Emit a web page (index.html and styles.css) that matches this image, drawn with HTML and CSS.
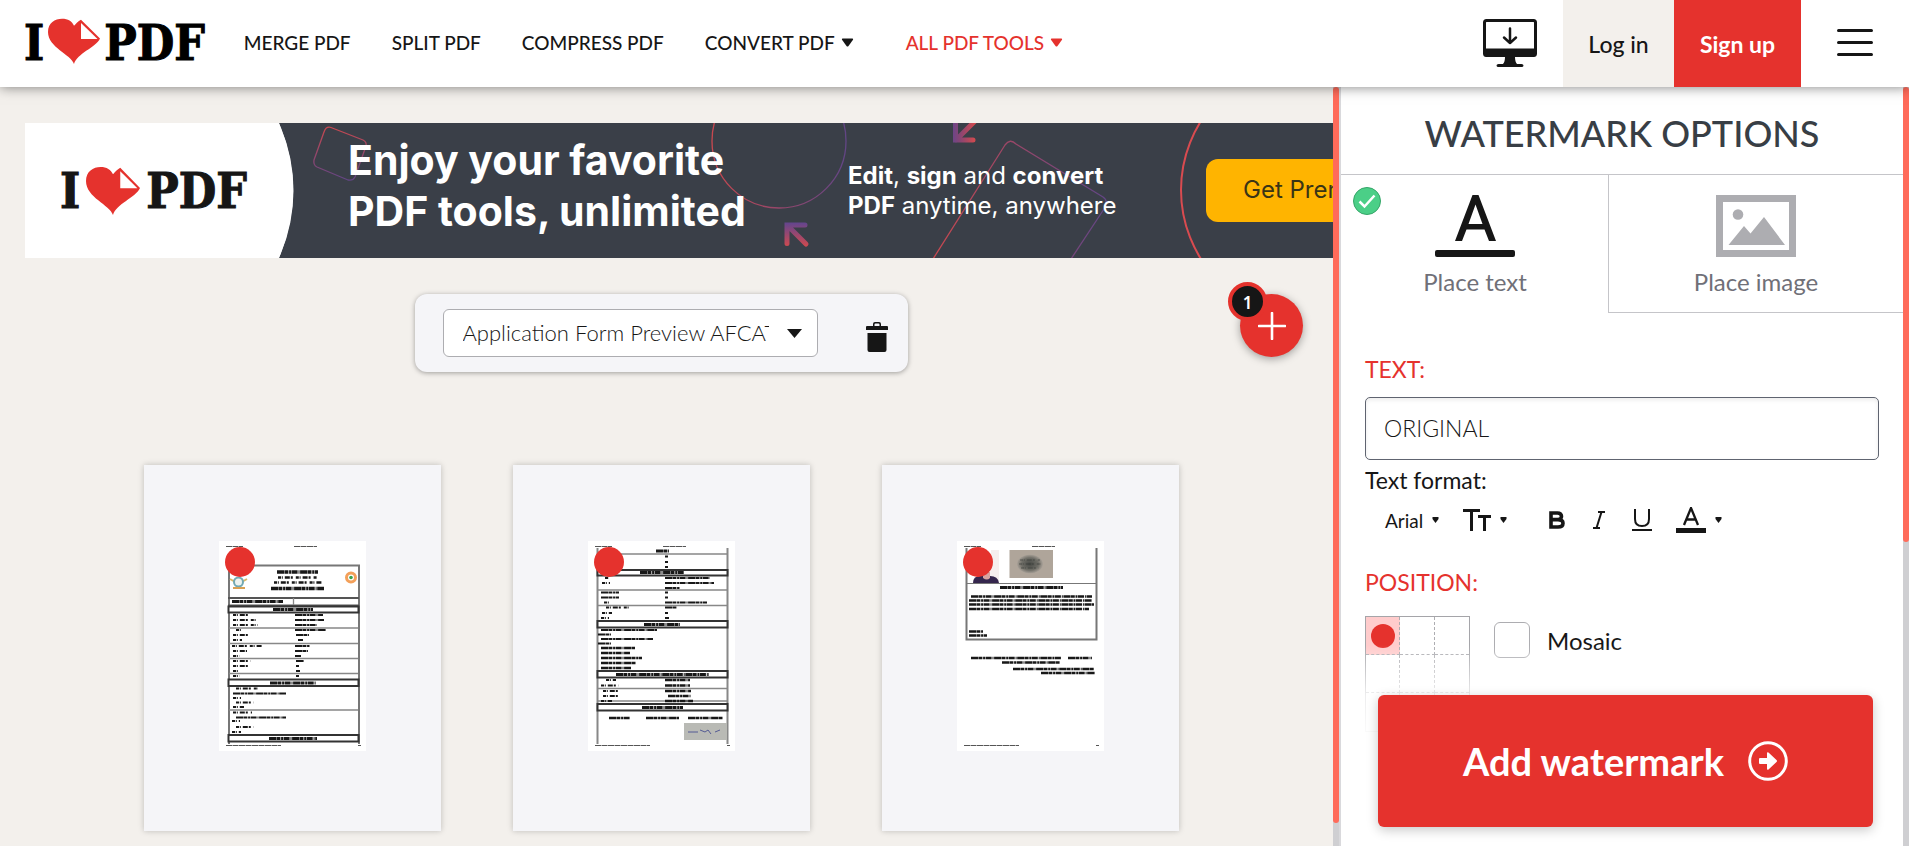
FILE: index.html
```html
<!DOCTYPE html>
<html lang="en">
<head>
<meta charset="utf-8">
<meta name="viewport" content="width=device-width, initial-scale=1">
<title>Watermark PDF</title>
<link rel="stylesheet" href="styles.css">
</head>
<body>
<svg class="defs" width="0" height="0" aria-hidden="true">
  <symbol id="heart" viewBox="0 0 52 56" preserveAspectRatio="none">
    <path fill="#e5322d" d="M26 56C23 44 0 36 0 17C0 6 7 1 14 1C20 1 24 4 26 9.500C28 6.500 30 4 33 2L52 25C48 36 29 43 26 56Z"/>
    <path fill="#fff" d="M33 6V25.500H49.500Z"/>
  </symbol>
</svg>
<header class="topbar">
  <a class="logo" href="#" aria-label="I love PDF"><span>I</span><svg class="logo-heart"><use href="#heart"/></svg><span>PDF</span></a>
  <nav class="nav">
    <a href="#">MERGE PDF</a>
    <a href="#">SPLIT PDF</a>
    <a href="#">COMPRESS PDF</a>
    <a href="#">CONVERT PDF<svg class="caret" viewBox="0 0 12 9"><path d="M1 .5h10q1 .3.500 1.200L7 8q-1 1-2 0L.5 1.700Q0 .8 1 .5z" fill="currentColor"/></svg></a>
    <a class="nav-all" href="#">ALL PDF TOOLS<svg class="caret" viewBox="0 0 12 9"><path d="M1 .5h10q1 .3.500 1.200L7 8q-1 1-2 0L.5 1.700Q0 .8 1 .5z" fill="currentColor"/></svg></a>
  </nav>
  <a class="desktop" href="#" aria-label="Desktop app">
    <svg viewBox="0 0 54 48" width="54" height="48">
      <rect x="1.500" y="1.500" width="51" height="35" rx="2" fill="#fff" stroke="#161616" stroke-width="3"/>
      <path d="M1.500 29.500h51V35q0 3-3 3h-45q-3 0-3-3zM22 38h10q0 5 2 7h4.500q2 0 2 1.500t-2 1.500h-23q-2 0-2-1.500t2-1.500H20q2-2 2-7z" fill="#161616"/>
      <path d="M27 9.500V24M21 18.500l6 5.500 6-5.500" fill="none" stroke="#161616" stroke-width="2.500" stroke-linecap="round" stroke-linejoin="round"/>
    </svg>
  </a>
  <a class="login" href="#">Log in</a>
  <a class="signup" href="#">Sign up</a>
  <button class="menu" type="button" aria-label="Menu"><svg viewBox="0 0 36 28" width="36" height="28"><path d="M1.500 1.500h33M1.500 13.500h33M1.500 25.500h33" stroke="#161616" stroke-width="3" stroke-linecap="round"/></svg></button>
</header>
<div class="workspace">
  <main class="stage">
    <a class="banner" href="#">
      <svg class="banner-art" width="1400" height="135" viewBox="0 0 1400 135" aria-hidden="true">
        <defs>
          <linearGradient id="g1" x1="0" y1="0" x2="0" y2="1"><stop offset="0" stop-color="#c8484f"/><stop offset="1" stop-color="#624585"/></linearGradient>
          <linearGradient id="g2" x1="0" y1="0" x2="1" y2="0"><stop offset="0" stop-color="#c8484f"/><stop offset="1" stop-color="#624585"/></linearGradient>
          <linearGradient id="g3" gradientUnits="userSpaceOnUse" x1="926" y1="0" x2="950" y2="0"><stop offset="0" stop-color="#65458d"/><stop offset=".4" stop-color="#8a4572"/><stop offset="1" stop-color="#d24a4e"/></linearGradient>
          <linearGradient id="g4" gradientUnits="userSpaceOnUse" x1="770" y1="100" x2="770" y2="124"><stop offset="0" stop-color="#65458d"/><stop offset="1" stop-color="#d24a4e"/></linearGradient>
        </defs>
        <path fill="#fff" d="M0 0H254Q282 67 254 135H0z"/>
        <circle cx="106" cy="67.500" r="162.500" fill="#fff"/>
        <path d="M306 4.500L338 17Q342 19 341 23L330 54Q328 58 323 57L292 44Q288 42 289 37L299 9Q301 3 306 4.500Z" fill="none" stroke="url(#g1)" stroke-width="1.300"/>
        <circle cx="754" cy="18" r="67" fill="none" stroke="url(#g2)" stroke-width="1.300"/>
        <path d="M908 136L980 22Q985 15 991 21L1078 74Q1084 78 1079 86L1046 136" fill="none" stroke="url(#g2)" stroke-width="1.300"/>
        <path d="M930.500 -2V17H948M931 17L950 -2" fill="none" stroke="url(#g3)" stroke-width="5" stroke-linecap="round"/>
        <path d="M762 120.500V102H780M763 103L781 121" fill="none" stroke="url(#g4)" stroke-width="5" stroke-linecap="round"/>
        <circle cx="1285" cy="67" r="129" fill="none" stroke="#d94b50" stroke-width="2"/>
      </svg>
      <span class="banner-logo"><span>I</span><svg class="banner-heart"><use href="#heart"/></svg><span>PDF</span></span>
      <span class="banner-title">Enjoy your favorite<br>PDF tools, unlimited</span>
      <span class="banner-copy"><b>Edit</b>, <b>sign</b> and <b>convert</b><br><b>PDF</b> anytime, anywhere</span>
      <span class="banner-cta">Get Premium</span>
    </a>
    <div class="toolrow">
      <div class="filebar">
        <div class="file-pick">
          <select class="file-select" aria-label="File"><option>Application Form Preview AFCAT 2023</option></select>
          <svg class="file-caret" viewBox="0 0 15 9" width="15" height="9"><path d="M0 0h15L7.500 9z" fill="#161616"/></svg>
        </div>
        <button class="trash" type="button" aria-label="Delete file"><svg viewBox="0 0 22 30" width="22" height="30"><path d="M1 4h6V2q0-2 2-2h4q2 0 2 2v2h6q1 0 1 1v3H0V5q0-1 1-1zM8.500 2.500V4h5V2.500q0-1-1-1h-3q-1 0-1 1zM1.500 11h19v17q0 2-2 2h-15q-2 0-2-2z" fill="#161616" fill-rule="evenodd"/></svg></button>
      </div>
      <button class="add" type="button" aria-label="Add more files"><svg viewBox="0 0 28 28" width="28" height="28"><path d="M14 1v26M1 14h26" stroke="#fff" stroke-width="2.600" stroke-linecap="round"/></svg><span class="add-count">1</span></button>
    </div>
    <div class="pages">
      <div class="card"><div class="sheet">
        <svg viewBox="0 0 147 210" width="147" height="210" aria-hidden="true">
          <g fill="none" stroke="#555" stroke-width="1"><path class="d3" d="M7 5.500h17M75 5.500h23M7 204.500h55M139 204.500h3"/></g>
          <path d="M10 24.500H140V203M10 24V203" fill="none" stroke="#777" stroke-width="2"/>
          <path d="M9 57h131M9 64.500h131" stroke="#555" stroke-width="2"/>
          <path d="M74.500 57v7M10 87h129M10 102.500h129M10 117.500h129M10 132.500h129M10 169h129" stroke="#888" stroke-width="1.300"/>
          <g fill="#fff" stroke="#333" stroke-width="2"><path d="M9.500 65.500h130v6h-130zM9.500 138.500h130v6.500h-130zM9.500 194h130v6.500h-130z"/></g>
          <g class="ink"><path class="d1" stroke-width="3.500" d="M58 31h41M52 47.500h53"/><path class="d2" stroke-width="2.500" d="M59 36.500h39M55 41.500h48"/><path class="d1" stroke-width="3" d="M13 60.500h51M54 68.500h40M51 142h46M50 197.500h48"/>
          <path class="d2" stroke-width="2" d="M14 74h17M14 79h23M14 84h25M17 89h5M14 94h15M14 99h9M13 105h30M14 110h14M14 115h7M14 120h18M14 125h17M14 130h5M14 135h7M17 147.500h22M14 157h8M17 161.500h18M14 166h11M14 171.500h19M13 180h8M17 186h18M13 191h9"/>
          <path class="d1" stroke-width="2" d="M76 74h28M76 79h29M76 84h22M76 89h31M77 94h13M79 99h5M76 105h15M76 110h13M76 115h6M77 120h8M77 125h3M77 130h4M77 135h3M14 152.500h53M17 176.500h50"/></g>
          <circle cx="132" cy="36.500" r="4.500" fill="#fff" stroke="#f3a05a" stroke-width="3"/><circle cx="132" cy="36.500" r="1.800" fill="#38a34a"/>
          <path d="M11 38l7 4M28 38l-7 4" stroke="#d9b766" stroke-width="2"/><circle cx="19.500" cy="41" r="4.500" fill="#eef3ef" stroke="#72a9b3" stroke-width="2"/><path d="M14 47h12" stroke="#d9a053" stroke-width="2"/>
        </svg><i class="mark"></i></div></div>
      <div class="card"><div class="sheet">
        <svg viewBox="0 0 147 210" width="147" height="210" aria-hidden="true">
          <g fill="none" stroke="#555" stroke-width="1"><path class="d3" d="M7 5.500h17M75 5.500h23M7 204.500h55M139 204.500h3"/></g>
          <path d="M9.500 7V203M139.500 7V203" stroke="#888" stroke-width="2"/>
          <path d="M10 13h129M10 49h129M10 64.500h129M10 147.500h129M10 160h129" stroke="#888" stroke-width="1.500"/>
          <g fill="#fff" stroke="#333" stroke-width="2"><path d="M9.500 29h130v5.500h-130zM9.500 80h130v6.500h-130zM9.500 130h130v6.500h-130zM9.500 163h130v6.500h-130z"/></g>
          <g class="ink"><path class="d1" stroke-width="3" d="M68 10h13M52 31.500h44M56 83.500h36M28 133.500h93M54 166.500h41"/>
          <path class="d1" stroke-width="2" d="M77 15.500h3M77 21h3M77 26h3M77 37h45M77 42h49M77 47h15M13 51.500h18M77 51.500h3M13 56.500h18M77 56.500h3M77 61.500h42M77 66.500h12M77 72h3M77 77h4M13 89h56M10 93.500h13M13 98h52M10 102.500h13"/>
          <path class="d1" stroke-width="2.600" d="M13 107h34M13 112h29M13 117h41M13 122h35M13 127h30M77 139h25M77 144.500h25M77 150h26M80 155h23M77 160h28M21 177h21M58 177h33M100 177h35"/>
          <path class="d2" stroke-width="2" d="M17 37h4M14 42h8M16 61.500h5M18 66.500h24M14 72h10M13 77h8M18 139h10M13 144.500h18M15 150h15M15 155h15M13 160h11"/></g>
          <rect x="96" y="182" width="43" height="17" fill="#b9bab5"/><path d="M100 191h10M112 189l5 2 3-2 3 4M127 191l5-2" fill="none" stroke="#555b94"/>
        </svg><i class="mark"></i></div></div>
      <div class="card"><div class="sheet">
        <svg viewBox="0 0 147 210" width="147" height="210" aria-hidden="true">
          <defs><radialGradient id="thumb"><stop offset="0" stop-color="#484a46"/><stop offset=".65" stop-color="#6f6e67"/><stop offset="1" stop-color="#a9a198"/></radialGradient></defs>
          <g fill="none" stroke="#555" stroke-width="1"><path class="d3" d="M7 5.500h17M75 5.500h23M7 204.500h55M139 204.500h3"/></g>
          <path d="M9.500 7V98.500H139.500V7" fill="none" stroke="#777" stroke-width="2"/><path d="M10 42.500h129" stroke="#777"/>
          <path d="M34 9h8v33H16q1-6 8-6h9z" fill="#f6eeee"/><path d="M16 42q0-8 9-7h8q8 0 9 7z" fill="#35264d"/><path d="M26 31h7v6q-3 3-7 0z" fill="#d8a3a0"/>
          <rect x="52.500" y="9" width="43.500" height="28" fill="#afa59a"/><ellipse cx="73" cy="23" rx="13" ry="9.500" fill="url(#thumb)"/><path class="d2" d="M63 19h20M62 23h22M64 27h18" stroke="#2f3330" stroke-width="1.500" opacity=".4"/>
          <g class="ink"><path class="d1" stroke-width="3" d="M43 46.500h63"/><path class="d1" stroke-width="2.500" d="M14 55.500h121M12 59.500h123M12 63.500h125M12 68h120M12 90.500h14M12 94.500h18"/><path class="d1" stroke-width="2.500" d="M14 117h90M111 117h24M45 121.500h58M56 128h81M84 132h54"/></g>
        </svg><i class="mark"></i></div></div>
    </div>
  </main>
  <div class="scroll scroll-main"><i></i></div>
  <aside class="panel">
    <h1 class="panel-title">WATERMARK OPTIONS</h1>
    <div class="tabs">
      <button class="tab tab-on" type="button">
        <svg class="tab-check" viewBox="0 0 28 28" width="28" height="28"><circle cx="14" cy="14" r="13.500" fill="#4bcf87" stroke="#35a568"/><path d="M6.500 14.500l5 5 10-11" fill="none" stroke="#fff" stroke-width="2.500"/></svg>
        <svg viewBox="0 0 80 62" width="80" height="62"><path d="M20 46L37.500 0h6L61 46h-7l-4.500-11.500h-18L27 46zM33.500 29h14L40.500 9.500z" fill="#161616"/><rect y="55" width="80" height="7" rx="2" fill="#161616"/></svg>
        <span>Place text</span>
      </button>
      <button class="tab" type="button">
        <svg viewBox="0 0 80 62" width="80" height="62"><path d="M3.500 3.500h73v55h-73z" fill="none" stroke="#adadb1" stroke-width="7"/><circle cx="22" cy="19.500" r="5.300" fill="#adadb1"/><path d="M12.500 50L28 31l6.500 7.500L48 22l21 28z" fill="#adadb1"/></svg>
        <span>Place image</span>
      </button>
    </div>
    <form class="options">
      <label class="heading" for="wm-text">TEXT:</label>
      <input class="wm-input" id="wm-text" type="text" value="ORIGINAL">
      <p class="sub">Text format:</p>
      <div class="format">
        <button class="fmt-font" type="button">Arial<svg class="mini" viewBox="0 0 6 6"><path d="M0 0h6v2L3 6 0 2z" fill="#161616"/></svg></button>
        <button class="fmt-size" type="button" aria-label="Size"><svg viewBox="0 0 28 22" width="28" height="22"><path d="M0 0h17v3h-7v19H7V3H0zM15 6h13v3h-5v13h-3V9h-5z" fill="#161616"/></svg><svg class="mini" viewBox="0 0 6 6"><path d="M0 0h6v2L3 6 0 2z" fill="#161616"/></svg></button>
        <button class="fmt-b" type="button" aria-label="Bold"><svg viewBox="0 0 16 18" width="16" height="18"><path d="M2 2h6.500q4 0 4 3.300T8.500 8.600H3h6q5 0 5 3.700T9 16H2z" fill="none" stroke="#161616" stroke-width="3.600"/></svg></button>
        <button class="fmt-i" type="button" aria-label="Italic"><svg viewBox="0 0 12 18" width="12" height="18"><path d="M5 1h7M0 17h7M8.500 1l-5 16" fill="none" stroke="#161616" stroke-width="2"/></svg></button>
        <button class="fmt-u" type="button" aria-label="Underline"><svg viewBox="0 0 20 22" width="20" height="22"><path d="M3 0v10q0 7 7 7t7-7V0M0 21h20" fill="none" stroke="#161616" stroke-width="2"/></svg></button>
        <button class="fmt-c" type="button" aria-label="Color"><svg viewBox="0 0 30 26" width="30" height="26"><path d="M8 18L15 1l7 17M10.500 12.500h9" fill="none" stroke="#161616" stroke-width="2.300"/><path d="M0 21h30v5H0z" fill="#161616"/></svg><svg class="mini" viewBox="0 0 6 6"><path d="M0 0h6v2L3 6 0 2z" fill="#161616"/></svg></button>
      </div>
      <p class="heading">POSITION:</p>
      <div class="position">
        <div class="pos-grid" role="radiogroup" aria-label="Position">
          <input type="radio" name="pos" aria-label="Top left" checked><input type="radio" name="pos" aria-label="Top center"><input type="radio" name="pos" aria-label="Top right">
          <input type="radio" name="pos" aria-label="Middle left"><input type="radio" name="pos" aria-label="Middle center"><input type="radio" name="pos" aria-label="Middle right">
          <input type="radio" name="pos" aria-label="Bottom left"><input type="radio" name="pos" aria-label="Bottom center"><input type="radio" name="pos" aria-label="Bottom right">
        </div>
        <label class="mosaic"><input type="checkbox">Mosaic</label>
      </div>
    </form>
    <div class="action">
      <button class="submit" type="button">Add watermark<svg viewBox="0 0 40 40" width="40" height="40"><circle cx="20" cy="20" r="18.300" fill="none" stroke="#fff" stroke-width="3"/><path d="M12 17h7v-4.500q0-2 1.500-1l8 7.500q1 1 0 2l-8 7.500q-1.500 1-1.500-1V23h-7q-1 0-1-1v-4q0-1 1-1z" fill="#fff"/></svg></button>
    </div>
  </aside>
  <div class="scroll scroll-panel"><i></i></div>
</div>
</body>
</html>
```
FILE: styles.css
```css
* { box-sizing: border-box; }
body {
  margin: 0;
  height: 100vh;
  display: flex;
  flex-direction: column;
  overflow: hidden;
  background: #f3f0ec;
  color: #161616;
  font-family: Lato, "Open Sans", sans-serif;
  font-size: 23px;
}
a { color: inherit; text-decoration: none; }
button { font: inherit; color: inherit; background: none; border: 0; padding: 0; cursor: pointer; }
svg { display: block; flex: none; }
h1, p { margin: 0; }
.defs { position: absolute; }

/* top bar */
.topbar {
  position: relative;
  z-index: 5;
  flex: none;
  height: 87px;
  padding: 0 0 2px 24px;
  display: flex;
  align-items: center;
  background: #fff;
  box-shadow: 0 0 12px rgba(0, 0, 0, .5);
}
.logo, .banner-logo {
  display: flex;
  align-items: center;
  font: bold 48px/48px "DejaVu Serif Condensed", "DejaVu Serif", serif;
  color: #000;
  -webkit-text-stroke: 1px currentColor;
}
.logo-heart { width: 52px; height: 46px; margin: 0 4px 4px 4px; }
.nav { display: flex; flex: 1; gap: 41px; margin-left: 39px; font-size: 19px; font-weight: 500; white-space: nowrap; }
.nav a { display: flex; align-items: center; gap: 6px; }
.nav .nav-all { margin-left: 11px; color: #e5322d; }
.caret { width: 13px; height: 9px; }
.desktop { margin-right: 26px; }
.login, .signup { align-self: stretch; display: flex; align-items: center; justify-content: center; margin-bottom: -2px; font-weight: 500; }
.login { width: 111px; background: #f3f0ec; }
.signup { width: 127px; background: #e5322d; color: #fff; font-weight: 700; }
.menu { margin: 0 36px; }

/* workspace */
.workspace { flex: 1; min-height: 0; display: flex; }
.stage { flex: 1; min-width: 0; overflow: hidden; padding: 36px 0 0 25px; }
.banner {
  position: relative;
  display: flex;
  align-items: center;
  height: 135px;
  overflow: hidden;
  background: #3a3f48;
  color: #fff;
  font-family: Inter, sans-serif;
  white-space: nowrap;
}
.banner > * { position: relative; flex: none; }
.banner .banner-art { position: absolute; left: 0; top: 0; }
.banner-logo { width: 288px; margin-left: 35px; color: #161616; }
.banner-heart { width: 54px; height: 49px; margin: 0 6px 0 6px; }
.banner-title { width: 500px; padding-bottom: 10px; font-size: 41px; line-height: 51px; font-weight: 700; }
.banner-copy { width: 358px; font-size: 24px; line-height: 30px; }
.banner-cta { height: 63px; padding: 0 37px; border-radius: 12px; background: #ffb400; color: #3a3416; font-size: 24px; line-height: 62px; }

.toolrow { position: relative; display: flex; justify-content: center; margin-top: 36px; padding-right: 36px; }
.filebar {
  display: flex;
  align-items: center;
  width: 493px;
  height: 78px;
  padding: 0 20px 0 28px;
  justify-content: space-between;
  border-radius: 12px;
  background: #f5f5f8;
  box-shadow: 0 1px 5px rgba(0, 0, 0, .35);
}
.file-pick { position: relative; width: 375px; }
.file-select {
  appearance: none;
  width: 100%;
  height: 48px;
  padding: 0 48px 2px 19px;
  border: 1px solid #adadb1;
  border-radius: 6px;
  background: #fff;
  color: #161616;
  font: 300 22px Lato, sans-serif;
}
.file-caret { position: absolute; right: 16px; top: 20px; }
.trash { margin-top: 8px; }
.add {
  position: absolute;
  right: 30px;
  top: 0;
  width: 63px;
  height: 63px;
  display: grid;
  place-items: center;
  border-radius: 50%;
  background: #e5322d;
  box-shadow: 0 2px 8px rgba(0, 0, 0, .35);
}
.add-count {
  position: absolute;
  left: -12px;
  top: -12px;
  width: 39px;
  height: 39px;
  border: 4px solid #e5322d;
  border-radius: 50%;
  background: #161616;
  color: #fff;
  font: 600 17px/33px "Noto Sans", "Open Sans", sans-serif;
}
.pages { display: flex; justify-content: center; gap: 72px; margin-top: 93px; padding-right: 35px; }
.card { width: 297px; height: 366px; display: grid; place-items: center; background: #f5f5f8; box-shadow: 0 0 6px rgba(0, 0, 0, .22); }
.sheet { position: relative; margin-bottom: 4px; background: #fff; }
.mark { position: absolute; left: 6px; top: 6px; width: 30px; height: 30px; border-radius: 50%; background: #e5322d; }
.ink { fill: none; stroke: #181818; }
.d1 { stroke-dasharray: 7 .4 4 .7 2 .5 6 .9 1 .6; }
.d2 { stroke-dasharray: 3 .8 1 2 5 1 2 3; }
.d3 { stroke-dasharray: 6 .5; }

/* scroll bars */
.scroll { flex: none; width: 6px; background: #cfcfd2; }
.scroll i { display: block; border-radius: 3px; background: #ff6b5a; }
.scroll-main i { height: 97%; }
.scroll-panel i { height: 60%; }

/* options panel */
.panel { position: relative; flex: none; width: 564px; overflow: hidden; border-left: 2px solid #d9d9dc; background: #fff; }
.panel-title { height: 88px; padding-top: 2px; border-bottom: 1px solid #c5c5c9; text-align: center; font-size: 36px; font-weight: 500; line-height: 88px; color: #383e45; }
.tabs { display: flex; height: 138px; }
.tab {
  position: relative;
  flex: 295;
  display: flex;
  flex-direction: column;
  align-items: center;
  padding-top: 20px;
  gap: 10px;
  border-left: 1px solid #c5c5c9;
  border-bottom: 1px solid #c5c5c9;
  font-size: 24px;
  line-height: 30px;
  color: #707078;
}
.tab-on { flex: 267; border-color: transparent; }
.tab-check { position: absolute; left: 11px; top: 12px; }
.options { padding: 41px 24px 0; }
.heading { display: block; line-height: 30px; color: #e5322d; }
.wm-input {
  display: block;
  width: 100%;
  height: 63px;
  margin: 13px 0 5px;
  padding: 0 18px 2px;
  border: 1px solid #5f6470;
  border-radius: 5px;
  box-shadow: inset 0 2px 4px rgba(0, 0, 0, .08);
  background: #fff;
  color: #161616;
  font: 300 23px Lato, sans-serif;
}
.sub { line-height: 30px; }
.format { display: flex; align-items: center; height: 40px; margin: 5px 0 27px; padding-left: 20px; font-size: 19px; }
.format button { display: flex; align-items: center; }
.mini { width: 7px; height: 6px; margin-left: 9px; }
.fmt-size { margin-left: 24px; }
.fmt-b { margin-left: 42px; }
.fmt-i { margin-left: 28px; }
.fmt-u { margin-left: 27px; }
.fmt-c { margin-left: 24px; }
.position { display: flex; gap: 24px; margin-top: 19px; }
.pos-grid { display: grid; grid-template-columns: repeat(3, 1fr); grid-auto-rows: 38px; width: 105px; border: 1px solid #a5a5a9; }
.pos-grid input { appearance: none; display: grid; place-items: center; margin: 0; border: 0 dashed #adadb1; border-width: 0 1px 1px 0; }
.pos-grid input:nth-child(3n) { border-right: 0; }
.pos-grid input:nth-child(n+7) { border-bottom: 0; }
.pos-grid input:checked { background: #fcc; }
.pos-grid input:checked::before { content: ""; width: 24px; height: 24px; border-radius: 50%; background: #e5322d; }
.mosaic { display: flex; align-items: center; gap: 17px; height: 36px; margin-top: 6px; font-size: 24px; }
.mosaic input { appearance: none; width: 36px; height: 36px; margin: 0; border: 1px solid #adadb1; border-radius: 6px; background: #fff; }
.action {
  position: absolute;
  left: 0;
  right: 0;
  bottom: 0;
  padding: 50px 30px 19px 37px;
  background: linear-gradient(rgba(255, 255, 255, 0), rgba(255, 255, 255, .8) 50px, #fff 100px);
}
.submit {
  display: flex;
  align-items: center;
  justify-content: center;
  gap: 24px;
  width: 100%;
  height: 132px;
  border-radius: 6px;
  background: #e5322d;
  box-shadow: 0 3px 12px rgba(0, 0, 0, .22);
  color: #fff;
  font-size: 38px;
  font-weight: 700;
}
```
